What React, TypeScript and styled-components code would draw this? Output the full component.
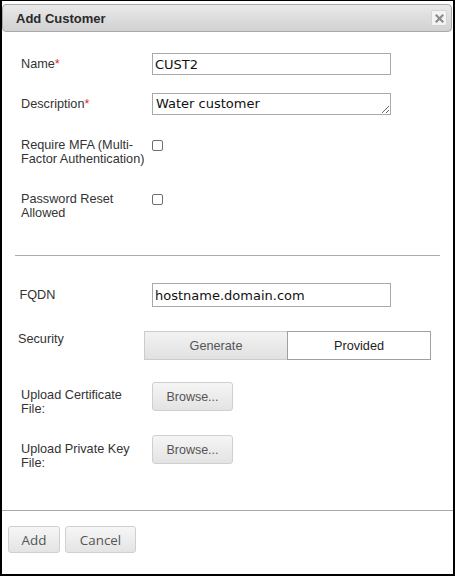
import React from "react";
import styled, { createGlobalStyle } from "styled-components";

const Global = createGlobalStyle`
  html, body { margin: 0; padding: 0; background: #fff; }
  body { font-family: "Liberation Sans", Arial, sans-serif; }
  * { box-sizing: border-box; }
`;

const Dialog = styled.div`
  width: 455px;
  height: 576px;
  border-style: solid;
  border-color: #000;
  border-width: 1px 2px 2px 2px;
  display: flex;
  flex-direction: column;
  background: #fff;
`;

const TitleBar = styled.div`
  margin: 3px 1px 0 0;
  height: 28px;
  flex: none;
  border: 1px solid #a9a9a9;
  border-radius: 4px;
  background: linear-gradient(#e9e9e9, #d1d1d1);
  display: flex;
  align-items: center;
  justify-content: space-between;
  padding: 0 4px 0 13px;
`;

const Title = styled.span`
  font: bold 13px "Liberation Sans", Arial, sans-serif;
  color: #2a2a2a;
`;

const CloseButton = styled.button`
  width: 16px;
  height: 16px;
  padding: 0;
  border: 1px solid #d4d4d4;
  border-radius: 2px;
  background: #f3f3f3;
  display: flex;
  align-items: center;
  justify-content: center;
`;

const Body = styled.div`
  flex: 1;
  display: flex;
  flex-direction: column;
`;

const Row = styled.div<{ $top: number; $pad?: number; $align?: string }>`
  display: flex;
  align-items: ${(p) => p.$align ?? "center"};
  margin-top: ${(p) => p.$top}px;
  padding-left: ${(p) => p.$pad ?? 19}px;
`;

const Label = styled.div<{ $w?: number; $padTop?: number }>`
  width: ${(p) => p.$w ?? 131}px;
  flex: none;
  padding-top: ${(p) => p.$padTop ?? 0}px;
  font-size: 12.7px;
  line-height: 14px;
  color: #333;
`;

const Req = styled.span`
  color: #e0262b;
`;

const TextInput = styled.input<{ $h: number }>`
  width: 239px;
  height: ${(p) => p.$h}px;
  margin: 0;
  padding: 0 2px;
  border: 1px solid #a9a9a9;
  border-radius: 0;
  font: 13px "DejaVu Sans", Verdana, sans-serif;
  line-height: 16px;
  color: #111;
  outline: none;
`;

const TextArea = styled.textarea`
  width: 239px;
  height: 22px;
  margin: 0;
  padding: 2px 3px;
  border: 1px solid #a9a9a9;
  font: 13px "DejaVu Sans", Verdana, sans-serif;
  line-height: 16px;
  color: #111;
  resize: both;
  overflow: hidden;
  outline: none;
  display: block;
`;

const Check = styled.input`
  appearance: none;
  width: 11px;
  height: 11px;
  margin: 2px 0 0 0;
  border: 1px solid #6e6e6e;
  border-radius: 2px;
  background: #fff;
  flex: none;
`;

const Separator = styled.div<{ $top: number }>`
  margin: ${(p) => p.$top}px 13px 0 13px;
  height: 1px;
  background: #ababab;
`;

const Toggle = styled.div`
  display: flex;
  height: 29px;
`;

const ToggleButton = styled.button<{ $active?: boolean }>`
  width: 144px;
  height: 29px;
  margin: 0 0 0 ${(p) => (p.$active ? -1 : 0)}px;
  padding: 0;
  position: relative;
  z-index: ${(p) => (p.$active ? 1 : 0)};
  border: 1px solid ${(p) => (p.$active ? "#a0a0a0" : "#cccccc")};
  background: ${(p) => (p.$active ? "#fff" : "linear-gradient(#f2f2f2, #e1e1e1)")};
  color: ${(p) => (p.$active ? "#1e1e1e" : "#555")};
  font: 12.7px "Liberation Sans", Arial, sans-serif;
`;

const BrowseButton = styled.button`
  width: 81px;
  height: 29px;
  padding: 0;
  border: 1px solid #cfcfcf;
  border-radius: 3px;
  background: linear-gradient(#f5f5f5, #e3e3e3);
  color: #555;
  font: 12.5px "Liberation Sans", Arial, sans-serif;
  flex: none;
`;

const Footer = styled.div`
  height: 64px;
  flex: none;
  border-top: 1px solid #a9a9a9;
  padding: 15px 6px 0 6px;
  display: flex;
  align-items: flex-start;
  gap: 5px;
`;

const FooterButton = styled.button<{ $w: number }>`
  width: ${(p) => p.$w}px;
  height: 27px;
  padding: 0;
  border: 1px solid #cfcfcf;
  border-radius: 3px;
  background: linear-gradient(#f6f6f6, #e4e4e4);
  color: #555;
  font: 13.4px "Open Sans", "Segoe UI", sans-serif;
`;

const CloseIcon = () => (
  <svg width="9" height="9" viewBox="0 0 9 9">
    <path d="M1.5 1.5 L7.5 7.5 M7.5 1.5 L1.5 7.5" stroke="#8c8c8c" strokeWidth="2.2" strokeLinecap="square" />
  </svg>
);

export default function App() {
  return (
    <>
      <Global />
      <Dialog>
        <TitleBar>
          <Title>Add Customer</Title>
          <CloseButton aria-label="close">
            <CloseIcon />
          </CloseButton>
        </TitleBar>
        <Body>
          <Row $top={21}>
            <Label>
              Name<Req>*</Req>
            </Label>
            <TextInput $h={22} defaultValue="CUST2" />
          </Row>
          <Row $top={18}>
            <Label>
              Description<Req>*</Req>
            </Label>
            <TextArea rows={1} defaultValue="Water customer" />
          </Row>
          <Row $top={23} $align="flex-start">
            <Label>
              Require MFA (Multi-
              <br />
              Factor Authentication)
            </Label>
            <Check type="checkbox" />
          </Row>
          <Row $top={26} $align="flex-start">
            <Label>
              Password Reset
              <br />
              Allowed
            </Label>
            <Check type="checkbox" />
          </Row>
          <Separator $top={35} />
          <Row $top={27} $pad={17.5} $align="center">
            <Label $w={132.5}>FQDN</Label>
            <TextInput $h={24} defaultValue="hostname.domain.com" />
          </Row>
          <Row $top={24} $pad={16} $align="flex-start">
            <Label $w={126} $padTop={1}>
              Security
            </Label>
            <Toggle>
              <ToggleButton>Generate</ToggleButton>
              <ToggleButton $active>Provided</ToggleButton>
            </Toggle>
          </Row>
          <Row $top={22} $align="flex-start">
            <Label $padTop={6}>
              Upload Certificate
              <br />
              File:
            </Label>
            <BrowseButton>Browse...</BrowseButton>
          </Row>
          <Row $top={19} $align="flex-start">
            <Label $padTop={7}>
              Upload Private Key
              <br />
              File:
            </Label>
            <BrowseButton>Browse...</BrowseButton>
          </Row>
        </Body>
        <Footer>
          <FooterButton $w={52}>Add</FooterButton>
          <FooterButton $w={71}>Cancel</FooterButton>
        </Footer>
      </Dialog>
    </>
  );
}
